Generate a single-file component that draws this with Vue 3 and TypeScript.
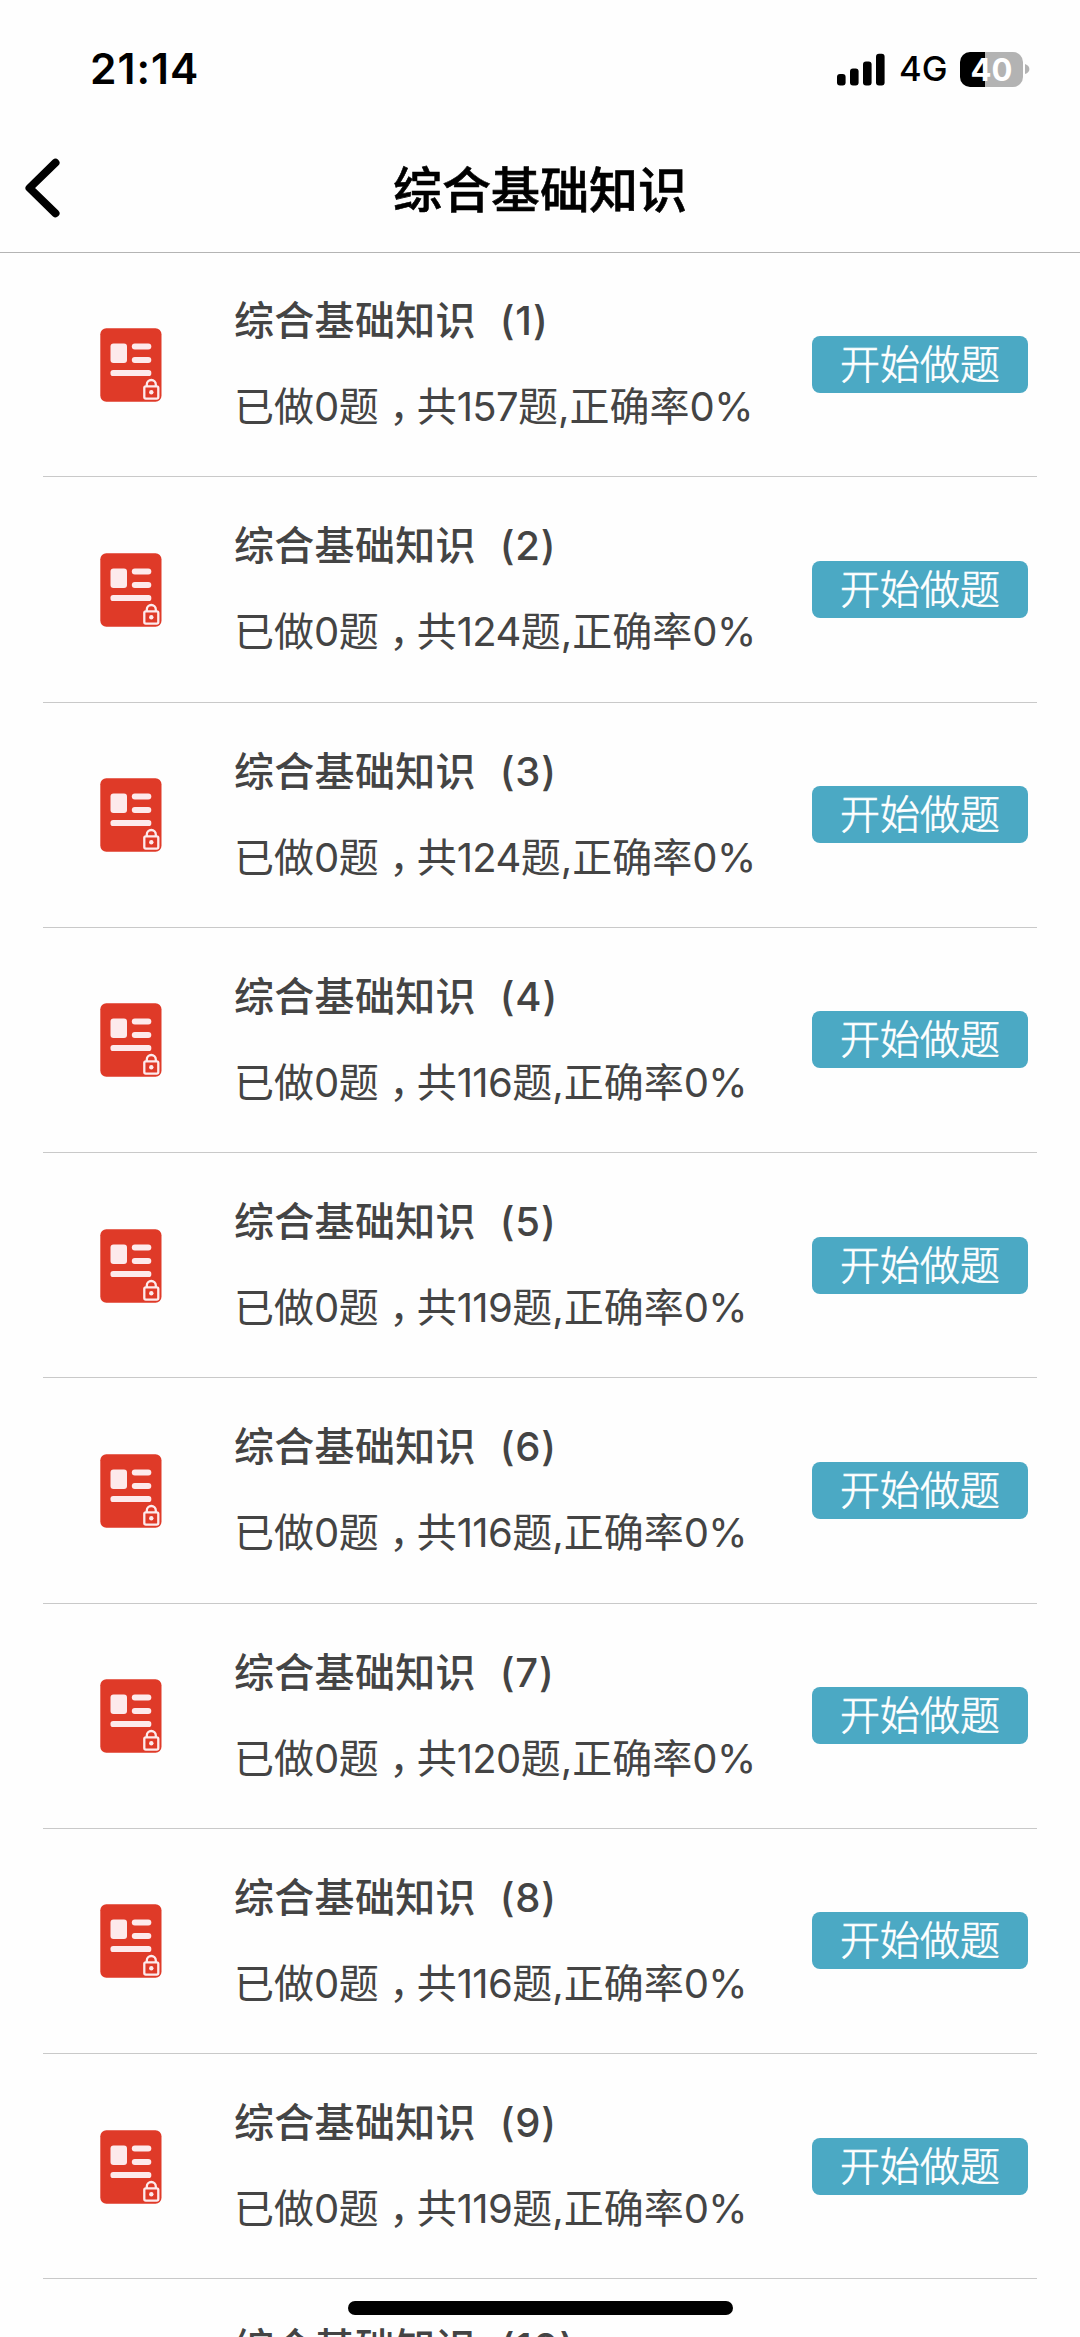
<script setup lang="ts">
interface Chapter {
  no: number
  total: number
}

const subject = '综合基础知识'
const totals: number[] = [157, 124, 124, 116, 119, 116, 120, 116, 119, 120]
const chapters: Chapter[] = totals.map((total, i) => ({ no: i + 1, total }))
</script>

<template>
  <div class="screen">
    <header class="status">
      <span class="time">21:14</span>
      <div class="indicators">
        <svg class="signal" width="48" height="33" viewBox="0 0 48 33">
          <rect x="0" y="21" width="8.6" height="11.5" rx="3" />
          <rect x="13" y="15.5" width="8.6" height="17" rx="3" />
          <rect x="26" y="8.5" width="8.6" height="24" rx="3" />
          <rect x="39" y="0.7" width="8.6" height="31.8" rx="3" />
        </svg>
        <span class="network">4G</span>
        <div class="battery"><span>40</span></div>
        <svg class="knob" width="5" height="12" viewBox="0 0 5 12"><path d="M0 1Q4.4 2.500 4.400 6T0 11Z" /></svg>
      </div>
    </header>

    <nav class="nav">
      <svg class="back" width="36" height="60" viewBox="0 0 36 60">
        <path d="M30.500 4.700L4.500 30L30.500 55.300" />
      </svg>
      <h1>{{ subject }}</h1>
    </nav>

    <main class="list">
      <section v-for="c in chapters" :key="c.no" class="row">
        <svg class="book" width="62" height="74" viewBox="0 0 62 74">
          <rect x="0.3" y="0.3" width="61.200" height="73.400" rx="6" fill="#df3a28" />
          <g fill="#fdeaec">
            <rect x="10.500" y="15.600" width="16.500" height="19.500" rx="3" />
            <rect x="31.800" y="15.600" width="19.500" height="6" rx="3" />
            <rect x="31.800" y="29" width="19.500" height="6" rx="3" />
            <rect x="10.500" y="42" width="40.800" height="6" rx="2.600" />
            <circle cx="51.300" cy="64.300" r="2.200" />
          </g>
          <g fill="none" stroke="#fdeaec" stroke-width="2.300">
            <rect x="44.300" y="58.300" width="14" height="12.300" rx="1.500" />
            <path d="M46.800 58V56.500a4.500 4.500 0 0 1 9 0V58" />
          </g>
        </svg>
        <div class="info">
          <div class="title">{{ subject }}<span class="index">({{ c.no }})</span></div>
          <div class="stats">已做<span class="num">0</span>题<span class="pause">，</span>共<span class="num">{{ c.total }}</span>题,正确率<span class="num">0%</span></div>
        </div>
        <button class="start" type="button">开始做题</button>
      </section>
    </main>
    <div class="home"></div>
  </div>
</template>

<style>
body {
  margin: 0;
  background: #fefefe;
}
</style>

<style scoped>
.screen {
  position: relative;
  width: 1080px;
  height: 2337px;
  overflow: hidden;
  background: #fefefe;
  color: #000;
  font-family: Inter, "Noto Sans CJK SC", sans-serif;
}
.status {
  height: 138px;
  box-sizing: border-box;
  display: flex;
  justify-content: space-between;
  padding: 0 50px 0 90px;
}
.time {
  font-size: 42.500px;
  font-weight: 600;
  letter-spacing: 1px;
  line-height: 138px;
}
.indicators {
  display: flex;
  align-items: center;
}
.signal {
  margin-right: 14px;
}
.network {
  width: 61px;
  font-size: 34.500px;
  font-weight: 500;
  line-height: 140px;
}
.battery {
  width: 63px;
  height: 35px;
  border-radius: 10px;
  background: linear-gradient(90deg, #000 25px, #b3b3b3 25px);
  color: #fff;
  font-size: 31px;
  font-weight: 700;
  line-height: 35px;
  text-align: center;
}
.knob {
  margin-left: 2px;
  fill: #b3b3b3;
}
.nav {
  height: 115px;
  box-sizing: border-box;
  display: grid;
  grid-template-columns: 110px 1fr 110px;
  border-bottom: 1px solid #b4b4b4;
}
.back {
  margin: 20px 0 0 25px;
  fill: none;
  stroke: #000;
  stroke-width: 8;
  stroke-linecap: round;
  stroke-linejoin: round;
}
h1 {
  margin: 0;
  font-size: 49px;
  font-weight: 500;
  line-height: 106px;
  text-align: center;
  -webkit-text-stroke: 0.6px #000;
}
.list {
  margin-top: -1px;
  padding: 0 43px;
}
.row {
  height: 225.250px;
  box-sizing: border-box;
  display: flex;
  align-items: center;
  padding: 0 9px 0 56.500px;
  border-bottom: 1px solid #c9c9c9;
}
.book {
  flex: none;
  margin-top: 1px;
}
.info {
  flex: 1;
  margin-left: 72.500px;
  color: #444;
  white-space: nowrap;
}
.title {
  height: 86px;
  font-size: 40px;
  font-weight: 500;
  line-height: 86px;
  letter-spacing: 0.300px;
}
.index {
  padding-left: 24px;
  letter-spacing: 0.800px;
}
.stats {
  height: 86px;
  font-size: 40px;
  font-weight: 400;
  line-height: 86px;
}
.num {
  letter-spacing: -0.600px;
}
.pause {
  margin-right: -2px;
  font-family: "Noto Sans CJK TC", sans-serif;
  line-height: 1;
  vertical-align: -12px;
}
.start {
  flex: none;
  width: 216px;
  height: 57px;
  padding: 0;
  border: 0;
  border-radius: 8px;
  background: #4ba9c4;
  color: #fff;
  font-family: inherit;
  font-size: 40px;
  font-weight: 300;
  line-height: 57px;
  -webkit-text-stroke: 0.6px #fff;
}
.home {
  position: absolute;
  left: 348px;
  top: 2301px;
  width: 385px;
  height: 14px;
  border-radius: 7px;
  background: #000;
}
</style>
